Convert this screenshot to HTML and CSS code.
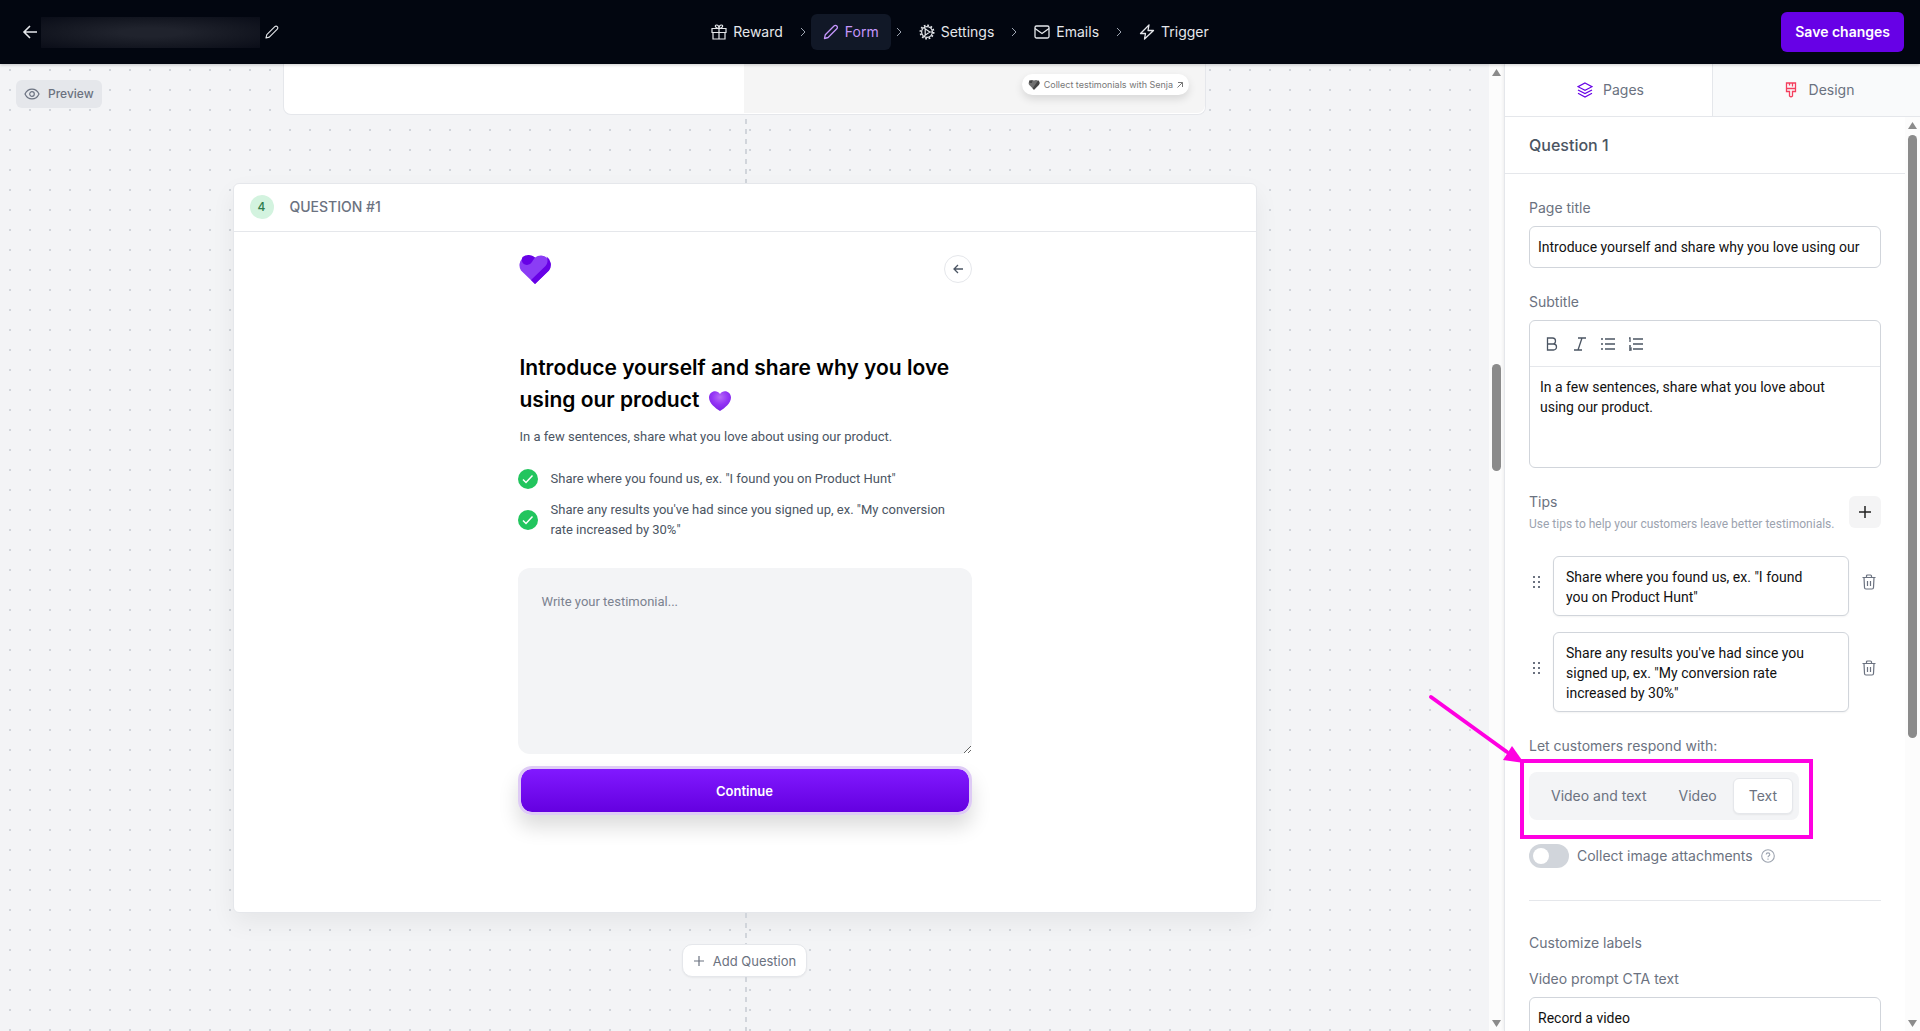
FILE: index.html
```html
<!DOCTYPE html>
<html lang="en">
<head>
    <meta charset="UTF-8">
    <meta name="viewport" content="width=device-width, initial-scale=1.0">
    <title>Form editor</title>
    <link rel="stylesheet" href="styles.css">
</head>
<body>

    <header class="topbar">
        <div class="topbar-left">
            <a href="#" class="icon-link" aria-label="Back">
                <svg width="16" height="16" viewBox="0 0 16 16" fill="none" stroke="currentColor" stroke-width="1.6"><path d="M15 8H2M8 2L2 8l6 6"/></svg>
            </a>
            <span class="form-name"></span>
            <button class="icon-link edit-name" aria-label="Rename">
                <svg width="14" height="14" viewBox="0 0 14 14" fill="none" stroke="currentColor" stroke-width="1.1" stroke-linejoin="round"><path d="M1 13l.8-3.4 8-8a1.7 1.7 0 0 1 2.5 2.5l-8 8z"/></svg>
            </button>
        </div>

        <nav class="steps">
            <a href="#" class="step">
                <svg width="16" height="16" viewBox="0 0 16 16" fill="none" stroke="currentColor" stroke-width="1.2"><path d="M1 4.5h14v4H1zM2 8.5h12V15H2zM8 4.5V15M8 4.5C4 4.500 3.500 1 5.500 1S8 3 8 4.500C8 3 8.500 1 10.500 1S12 4.500 8 4.500"/></svg>
                Reward
            </a>
            <svg class="chevron" width="16" height="16" viewBox="0 0 16 16"><path d="M6 4l4 4-4 4"/></svg>
            <a href="#" class="step active">
                <svg width="16" height="16" viewBox="0 0 16 16" fill="none" stroke="currentColor" stroke-width="1.3" stroke-linejoin="round"><path d="M1.500 14.500l.8-3.800 8.700-8.700a1.900 1.900 0 0 1 2.800 2.800l-8.700 8.700z"/></svg>
                Form
            </a>
            <svg class="chevron" width="16" height="16" viewBox="0 0 16 16"><path d="M6 4l4 4-4 4"/></svg>
            <a href="#" class="step">
                <svg width="16" height="16" viewBox="0 0 16 16" fill="none" stroke="currentColor" stroke-width="1.200"><circle cx="8" cy="8" r="5.400"/><circle cx="8" cy="8" r="6.600" stroke-width="1.800" stroke-dasharray="1.730 1.730"/><path d="M6.200 4.800v6.400L10.800 8zM10 8h3.500M6.200 4.800L5 3.200M6.200 11.200L5 12.800"/></svg>
                Settings
            </a>
            <svg class="chevron" width="16" height="16" viewBox="0 0 16 16"><path d="M6 4l4 4-4 4"/></svg>
            <a href="#" class="step">
                <svg width="16" height="16" viewBox="0 0 16 16" fill="none" stroke="currentColor" stroke-width="1.300"><rect x="1" y="2" width="14" height="12" rx="1.500"/><path d="M1 4.500l7 5 7-5"/></svg>
                Emails
            </a>
            <svg class="chevron" width="16" height="16" viewBox="0 0 16 16"><path d="M6 4l4 4-4 4"/></svg>
            <a href="#" class="step">
                <svg width="16" height="16" viewBox="0 0 16 16" fill="none" stroke="currentColor" stroke-width="1.300" stroke-linejoin="round"><path d="M10 1L1.500 9.500h5L5.500 15l9-8.500H9z"/></svg>
                Trigger
            </a>
        </nav>

        <div class="topbar-right">
            <button class="save-button">Save changes</button>
        </div>
    </header>

    <div class="workspace">
        <main class="canvas">
            <button class="preview-button">
                <svg width="16" height="16" viewBox="0 0 16 16" fill="none" stroke="currentColor" stroke-width="1.200"><path d="M1 8c3-6.500 11-6.500 14 0-3 6.500-11 6.500-14 0z"/><circle cx="8" cy="8" r="2.300"/></svg>
                Preview
            </button>

            <section class="previous-card">
                <div class="half"></div>
                <div class="half shaded">
                    <a href="#" class="senja-badge">
                        <svg width="12" height="11" viewBox="0 0 34 30"><path fill="#707070" d="M17 30L3 16A9.500 9.500 0 0 1 17 4a9.500 9.500 0 0 1 14 12z"/><path fill="#444" d="M17 30l-4-4L29 3a10 10 0 0 1 2 13zM3 4h10l-2 7H4z"/></svg>
                        <span>Collect testimonials with Senja</span>
                        <svg width="6" height="6" viewBox="0 0 6 6" fill="none" stroke="currentColor"><path d="M.5 5.500l5-5M1 .5h4.500V5"/></svg>
                    </a>
                </div>
            </section>
            <div class="connector connector-top"></div>

            <section class="question-card">
                <header class="card-header">
                    <span class="number">4</span>
                    <span>QUESTION #1</span>
                </header>
                <div class="form-preview">
                    <div class="logo-row">
                        <svg class="logo" width="34" height="30" viewBox="0 0 34 30">
                            <path fill="#8b3df5" d="M17 30L3 16.500A9.700 9.700 0 0 1 17 3.500a9.700 9.700 0 0 1 14 13z"/>
                            <path fill="#6701e6" d="M17 30l-4-3.900L27.500 12c2.500-3 2.500-6.500 1-9.400A9.700 9.700 0 0 1 31 16.500z"/>
                            <path fill="#6701e6" d="M4.500 3A9.500 9.500 0 0 1 17 3.500c-2 2-3 7-8 7.500-4 0-6.500-4-4.500-8z"/>
                        </svg>
                        <button class="back-button" aria-label="Previous page">
                            <svg width="12" height="12" viewBox="0 0 12 12" fill="none" stroke="currentColor" stroke-width="1.300"><path d="M11 6H2M6 2L2 6l4 4"/></svg>
                        </button>
                    </div>
                    <h1>Introduce yourself and share why you love using our product
                        <svg width="22" height="20" viewBox="0 0 22 20">
                            <defs><radialGradient id="heart-fill" cx="50%" cy="30%" r="75%"><stop offset="0" stop-color="#b66bf7"/><stop offset=".5" stop-color="#9333f5"/><stop offset="1" stop-color="#7420df"/></radialGradient></defs>
                            <path fill="url(#heart-fill)" d="M11 20C6 17 0 12 0 6.500 0 0 8-2 11 3c3-5 11-3 11 3.500C22 12 16 17 11 20z"/>
                        </svg>
                    </h1>
                    <p class="subtitle">In a few sentences, share what you love about using our product.</p>
                    <ul class="checklist">
                        <li>
                            <svg width="20" height="20" viewBox="0 0 20 20"><circle cx="10" cy="10" r="10" fill="#22c55e"/><path d="M5 10.500l3 3 6.500-7" fill="none" stroke="#fff" stroke-width="1.500"/></svg>
                            <span>Share where you found us, ex. "I found you on Product Hunt"</span>
                        </li>
                        <li>
                            <svg width="20" height="20" viewBox="0 0 20 20"><circle cx="10" cy="10" r="10" fill="#22c55e"/><path d="M5 10.500l3 3 6.500-7" fill="none" stroke="#fff" stroke-width="1.500"/></svg>
                            <span>Share any results you've had since you signed up, ex. "My conversion rate increased by 30%"</span>
                        </li>
                    </ul>
                    <textarea class="testimonial" placeholder="Write your testimonial..." aria-label="Testimonial"></textarea>
                    <button class="continue-button">Continue</button>
                </div>
            </section>

            <div class="connector connector-middle"></div>
            <button class="add-question">
                <svg width="12" height="12" viewBox="0 0 12 12" fill="none" stroke="currentColor" stroke-width="1.200"><path d="M6 1v10M1 6h10"/></svg>
                Add Question
            </button>
            <div class="connector connector-bottom"></div>
        </main>

        <div class="scrollbar canvas-scrollbar">
            <svg width="9" height="7" viewBox="0 0 9 7"><path d="M4.500 0L9 7H0z"/></svg>
            <div class="track"><div class="thumb"></div></div>
            <svg width="9" height="7" viewBox="0 0 9 7"><path d="M0 0h9L4.500 7z"/></svg>
        </div>

        <aside class="sidebar">
            <div class="tabs">
                <button class="tab selected">
                    <svg width="16" height="16" viewBox="0 0 16 16" fill="none" stroke="#6701e6" stroke-width="1.200"><path d="M8 1l7 3.700-7 3.600-7-3.600zM1 8l7 3.600L15 8M1 11.300L8 15l7-3.700"/></svg>
                    Pages
                </button>
                <button class="tab">
                    <svg width="16" height="16" viewBox="0 0 16 16" fill="none" stroke="#f43f5e" stroke-width="1.300"><path d="M3.500 1h9v8.500H9.500V14q-1.500 1.500-3 0V9.500h-3zM3.500 6.500h9M6.500 1v2.500M9.500 1v3.500"/></svg>
                    Design
                </button>
            </div>

            <div class="sidebar-body">
                <div class="settings">
                    <h2>Question 1</h2>
                    <div class="settings-form">
                        <div class="field">
                            <label for="pageTitle">Page title</label>
                            <input type="text" id="pageTitle" value="Introduce yourself and share why you love using our product 💜">
                        </div>

                        <div class="field">
                            <label for="subtitle">Subtitle</label>
                            <div class="editor">
                                <div class="toolbar">
                                    <button aria-label="Bold"><svg width="16" height="16" viewBox="0 0 16 16"><path d="M3.500 2h5a3 3 0 0 1 0 6h-5zM3.500 8h6a3 3 0 0 1 0 6h-6z"/></svg></button>
                                    <button aria-label="Italic"><svg width="16" height="16" viewBox="0 0 16 16"><path d="M6 2h8M2 14h8M10 2L6 14"/></svg></button>
                                    <button aria-label="Bullet list"><svg width="16" height="16" viewBox="0 0 16 16"><path d="M5 3h10M5 8h10M5 13h10M1 3h2M1 8h2M1 13h2"/></svg></button>
                                    <button aria-label="Numbered list"><svg width="16" height="16" viewBox="0 0 16 16"><path d="M5 3h10M5 8h10M5 13h10M1 2h1v4M1 10h2M1 12h2v2H1"/></svg></button>
                                </div>
                                <textarea id="subtitle">In a few sentences, share what you love about using our product.</textarea>
                            </div>
                        </div>

                        <div class="tips-heading">
                            <div>
                                <h3>Tips</h3>
                                <p>Use tips to help your customers leave better testimonials.</p>
                            </div>
                            <button class="add-tip" aria-label="Add tip">
                                <svg width="12" height="12" viewBox="0 0 12 12" fill="none" stroke="currentColor" stroke-width="1.500"><path d="M6 0v12M0 6h12"/></svg>
                            </button>
                        </div>

                        <div class="tips">
                            <div class="tip">
                                <svg class="handle" width="8" height="12" viewBox="0 0 8 12"><path d="M0 0h2v2H0zM5 0h2v2H5zM0 5h2v2H0zM5 5h2v2H5zM0 10h2v2H0zM5 10h2v2H5z"/></svg>
                                <textarea rows="2" aria-label="Tip 1">Share where you found us, ex. "I found you on Product Hunt"</textarea>
                                <button class="delete" aria-label="Delete tip 1"><svg width="14" height="16" viewBox="0 0 14 16"><path d="M.5 3.500h13M2 3.500l.5 10q0 1.500 1.500 1.500h6q1.500 0 1.500-1.500l.5-10M4.500 3.500V2q0-1 1-1h3q1 0 1 1v1.500M5.500 7v5M8.500 7v5"/></svg></button>
                            </div>
                            <div class="tip">
                                <svg class="handle" width="8" height="12" viewBox="0 0 8 12"><path d="M0 0h2v2H0zM5 0h2v2H5zM0 5h2v2H0zM5 5h2v2H5zM0 10h2v2H0zM5 10h2v2H5z"/></svg>
                                <textarea rows="3" aria-label="Tip 2">Share any results you've had since you signed up, ex. "My conversion rate increased by 30%"</textarea>
                                <button class="delete" aria-label="Delete tip 2"><svg width="14" height="16" viewBox="0 0 14 16"><path d="M.5 3.500h13M2 3.500l.5 10q0 1.500 1.500 1.500h6q1.500 0 1.500-1.500l.5-10M4.500 3.500V2q0-1 1-1h3q1 0 1 1v1.500M5.500 7v5M8.500 7v5"/></svg></button>
                            </div>
                        </div>

                        <h3 id="respondLabel">Let customers respond with:</h3>
                        <div class="segmented" role="radiogroup" aria-labelledby="respondLabel">
                            <input type="radio" name="respond" id="respondBoth">
                            <label for="respondBoth">Video and text</label>
                            <input type="radio" name="respond" id="respondVideo">
                            <label for="respondVideo">Video</label>
                            <input type="radio" name="respond" id="respondText" checked>
                            <label for="respondText">Text</label>
                            <div class="highlight"></div>
                            <svg class="arrow" width="96" height="72" viewBox="0 0 96 72"><path d="M3 4l76 55" fill="none" stroke="#ff00e1" stroke-width="4" stroke-linecap="round"/><path d="M84 53l12 17-21-3z" fill="#ff00e1"/></svg>
                        </div>

                        <div class="toggle-row">
                            <input type="checkbox" class="toggle" id="collectImages">
                            <label for="collectImages">Collect image attachments</label>
                            <svg width="14" height="14" viewBox="0 0 14 14" fill="none" stroke="#9ca3af" stroke-width="1.100"><circle cx="7" cy="7" r="6.300"/><path d="M5.200 5.500c0-2.200 3.600-2.200 3.600 0C8.800 6.800 7 6.800 7 8.300M7 9.500v1.200"/></svg>
                        </div>

                        <hr>

                        <h3>Customize labels</h3>
                        <div class="field cta-field">
                            <label for="videoCta">Video prompt CTA text</label>
                            <input type="text" id="videoCta" value="Record a video">
                        </div>
                    </div>
                </div>
                <div class="scrollbar sidebar-scrollbar">
                    <svg width="9" height="7" viewBox="0 0 9 7"><path d="M4.500 0L9 7H0z"/></svg>
                    <div class="track"><div class="thumb"></div></div>
                    <svg width="9" height="7" viewBox="0 0 9 7"><path d="M0 0h9L4.500 7z"/></svg>
                </div>
            </div>
        </aside>
    </div>

</body>
</html>
```
FILE: styles.css
```css
* {
    box-sizing: border-box;
}
body {
    margin: 0;
    height: 100vh;
    overflow: hidden;
    display: flex;
    flex-direction: column;
    font-family: Inter, "Liberation Sans", sans-serif;
    font-size: 14px;
    line-height: 20px;
    color: #6b7280;
}
button, input, textarea {
    font: inherit;
    color: inherit;
    margin: 0;
}
button {
    padding: 0;
    border: none;
    background: none;
    cursor: pointer;
}
a {
    color: inherit;
    text-decoration: none;
}
h1, h2, h3, p, ul {
    margin: 0;
    padding: 0;
    font-weight: 400;
}
h3 {
    font-size: 14px;
}
svg {
    display: block;
    flex-shrink: 0;
}

/* Top bar */
.topbar {
    display: grid;
    grid-template-columns: 1fr auto 1fr;
    align-items: center;
    height: 64px;
    flex-shrink: 0;
    padding: 0 16px;
    background-color: #020610;
    color: #e5e7eb;
    box-shadow: 0 1px 3px rgba(0, 0, 0, 0.2);
    z-index: 3;
}
.topbar-left {
    display: flex;
    align-items: center;
    padding-left: 6px;
}
.form-name {
    width: 219px;
    height: 31px;
    margin: 0 5px 0 3px;
    background: radial-gradient(ellipse at center, #20232d 20%, #151822 60%, #0a0d18 100%);
}
.steps {
    display: flex;
    align-items: center;
}
.step {
    display: flex;
    align-items: center;
    gap: 6px;
    height: 36px;
    padding: 0 12px;
    border-radius: 6px;
}
.step.active {
    background-color: #111827;
    color: #c596fc;
}
.chevron {
    fill: none;
    stroke: #9ca3af;
}
.topbar-right {
    display: flex;
    justify-content: flex-end;
}
.save-button {
    height: 40px;
    padding: 0 14px;
    border-radius: 6px;
    background-color: #6701e6;
    color: white;
    font-weight: 600;
}

/* Canvas */
.workspace {
    display: flex;
    flex: 1;
    min-height: 0;
}
.canvas {
    position: relative;
    flex: 1;
    display: flex;
    flex-direction: column;
    align-items: center;
    overflow: hidden;
    background-color: #f3f4f6;
    background-image: conic-gradient(from 270deg at 2px 2px, #d1d5db 90deg, transparent 0);
    background-size: 20px 20px;
    background-position: 9px 5px;
}
.preview-button {
    position: absolute;
    top: 16px;
    left: 16px;
    display: flex;
    align-items: center;
    gap: 8px;
    height: 28px;
    padding: 0 8px;
    border-radius: 6px;
    background-color: #e5e7eb;
    font-size: 12px;
    font-weight: 500;
}
.previous-card {
    display: flex;
    flex-shrink: 0;
    width: 62%;
    height: 51px;
    border: 1px solid #e5e7eb;
    border-top: none;
    border-radius: 0 0 8px 8px;
    background-color: white;
}
.half {
    width: 50%;
}
.shaded {
    display: flex;
    justify-content: flex-end;
    align-items: flex-start;
    margin-bottom: 1px;
    padding: 10px 16px;
    border-radius: 0 0 8px 0;
    background-color: #f5f5f5;
}
.senja-badge {
    display: flex;
    align-items: center;
    gap: 4px;
    height: 21px;
    padding: 0 6px;
    border-radius: 11px;
    background-color: white;
    box-shadow: 0 4px 8px rgba(0, 0, 0, 0.12);
    font-size: 9px;
    color: #777;
}
.connector {
    width: 2px;
    flex-shrink: 0;
    margin-left: 2px;
    background: repeating-linear-gradient(#d1d5db 0 5px, transparent 5px 10px);
}
.connector-top {
    height: 64px;
    margin-top: 4px;
}
.connector-middle {
    height: 31px;
}
.connector-bottom {
    flex: 1;
}
.question-card {
    flex-shrink: 0;
    width: 1024px;
    max-width: 90%;
    padding-bottom: 97px;
    border: 1px solid #e5e7eb;
    border-radius: 6px;
    background-color: white;
    box-shadow: 0 10px 24px rgba(0, 0, 0, 0.06);
}
.card-header {
    display: flex;
    align-items: center;
    gap: 16px;
    height: 48px;
    padding: 0 16px 2px;
    border-bottom: 1px solid #e5e7eb;
    font-weight: 500;
}
.number {
    width: 24px;
    height: 24px;
    border-radius: 50%;
    background-color: #d3f3df;
    color: #2f7d4d;
    font-size: 12px;
    line-height: 24px;
    text-align: center;
}
.form-preview {
    width: 454px;
    margin: 0 auto;
    padding-top: 23px;
    font-family: Roboto, "Liberation Sans", sans-serif;
    font-size: 13px;
    color: #4b5563;
}
.logo-row {
    display: flex;
    justify-content: space-between;
    align-items: center;
    height: 28px;
}
.back-button {
    display: flex;
    align-items: center;
    justify-content: center;
    width: 28px;
    height: 28px;
    border: 1px solid #e5e7eb;
    border-radius: 50%;
}
.form-preview h1 {
    margin-top: 69px;
    padding-left: 2px;
    font-family: Inter, "Liberation Sans", sans-serif;
    font-size: 21px;
    font-weight: 600;
    line-height: 32px;
    color: black;
}
.form-preview h1 svg {
    display: inline-block;
    vertical-align: middle;
    margin-left: 4px;
}
.subtitle {
    margin-top: 11px;
    padding-left: 2px;
}
.checklist {
    display: flex;
    flex-direction: column;
    gap: 11px;
    margin-top: 22px;
    padding-right: 12px;
    list-style: none;
}
.checklist li {
    display: flex;
    align-items: center;
    gap: 13px;
}
.testimonial {
    display: block;
    width: 100%;
    height: 186px;
    margin-top: 28px;
    padding: 24px;
    border: none;
    border-radius: 12px;
    background-color: #f3f4f6;
    resize: vertical;
}
.testimonial::placeholder {
    color: #7b8290;
}
.continue-button {
    width: 100%;
    height: 49px;
    margin-top: 12px;
    border: 3px solid #decbf5;
    border-radius: 14px;
    background: linear-gradient(#8119ff, #6400e0) padding-box;
    box-shadow: 0 12px 20px rgba(0, 0, 0, 0.14);
    font-family: Inter, "Liberation Sans", sans-serif;
    color: white;
    font-weight: 600;
}
.add-question {
    display: flex;
    align-items: center;
    gap: 8px;
    flex-shrink: 0;
    height: 33px;
    padding: 0 10px;
    border: 1px solid #e5e7eb;
    border-radius: 10px;
    background-color: white;
    box-shadow: 0 1px 2px rgba(0, 0, 0, 0.05);
    font-size: 13px;
}

/* Scrollbars */
.scrollbar {
    display: flex;
    flex-direction: column;
    align-items: center;
    gap: 6px;
    flex-shrink: 0;
    width: 15px;
    padding: 5px 0 4px;
    background-color: #fcfcfc;
    fill: #8b8b8b;
}
.track {
    flex: 1;
    display: flex;
    flex-direction: column;
    width: 9px;
}
.track::before, .track::after {
    content: "";
}
.thumb {
    border-radius: 5px;
    background-color: #8b8b8b;
}
.canvas-scrollbar .track::before {
    flex: 282;
}
.canvas-scrollbar .thumb {
    flex: 107;
}
.canvas-scrollbar .track::after {
    flex: 544;
}
.sidebar-scrollbar .thumb {
    flex: 24;
}
.sidebar-scrollbar .track::after {
    flex: 11;
}

/* Sidebar */
.sidebar {
    display: flex;
    flex-direction: column;
    width: 416px;
    flex-shrink: 0;
    border-left: 1px solid #e5e7eb;
    background-color: white;
    box-shadow: -1px 0 3px rgba(0, 0, 0, 0.06);
    z-index: 2;
}
.tabs {
    display: flex;
    flex-shrink: 0;
    height: 53px;
    border-bottom: 1px solid #e5e7eb;
}
.tab {
    flex: 1;
    display: flex;
    align-items: center;
    justify-content: center;
    gap: 10px;
    padding-left: 4px;
    background-color: #f9fafb;
}
.tab.selected {
    border-right: 1px solid #e5e7eb;
    background-color: white;
}
.sidebar-body {
    display: flex;
    flex: 1;
    min-height: 0;
    overflow-x: visible;
    overflow-y: clip;
}
.settings {
    flex: 1;
    min-width: 0;
}
.settings h2 {
    height: 57px;
    padding: 0 24px;
    border-bottom: 1px solid #e5e7eb;
    font-size: 16px;
    font-weight: 500;
    line-height: 56px;
    color: #4b5563;
}
.settings-form {
    padding: 24px;
}
.field {
    margin-bottom: 24px;
}
.field > label {
    display: block;
    margin-bottom: 8px;
}
input[type="text"], .editor textarea, .tip textarea {
    font-family: Roboto, "Liberation Sans", sans-serif;
    color: #111;
}
input[type="text"] {
    width: 100%;
    height: 42px;
    padding: 0 20px 0 8px;
    border: 1px solid #d1d5db;
    border-radius: 6px;
}
.editor {
    border: 1px solid #d1d5db;
    border-radius: 6px;
}
.toolbar {
    display: flex;
    align-items: center;
    gap: 12px;
    height: 46px;
    padding: 0 14px;
    border-bottom: 1px solid #e5e7eb;
}
.toolbar svg {
    fill: none;
    stroke: #4b5563;
    stroke-width: 1.3;
}
.editor textarea {
    display: block;
    width: 100%;
    height: 100px;
    padding: 10px 36px 10px 10px;
    border: none;
    border-radius: 6px;
    background: none;
    resize: none;
}
.tips-heading {
    display: flex;
    align-items: center;
    justify-content: space-between;
    height: 40px;
    margin-bottom: 24px;
}
.tips-heading > div {
    width: 320px;
}
.tips-heading p {
    margin-top: 4px;
    font-family: Roboto, "Liberation Sans", sans-serif;
    font-size: 12px;
    line-height: 16px;
    white-space: nowrap;
    color: #9ca3af;
}
.add-tip {
    display: flex;
    align-items: center;
    justify-content: center;
    width: 32px;
    height: 32px;
    border-radius: 6px;
    background-color: #f4f4f5;
    color: #222;
}
.tips {
    display: flex;
    flex-direction: column;
    gap: 16px;
    margin-bottom: 24px;
}
.tip {
    display: flex;
    align-items: center;
    padding: 0 5px 0 4px;
}
.handle {
    margin-bottom: 8px;
    fill: #6b7280;
}
.tip textarea {
    display: block;
    flex: 1;
    min-width: 0;
    margin: 0 13px 0 12px;
    padding: 10px 32px 8px 12px;
    border: 1px solid #d1d5db;
    border-radius: 6px;
    box-shadow: 0 1px 2px rgba(0, 0, 0, 0.05);
    resize: none;
    overflow: hidden;
}
.delete {
    margin-bottom: 8px;
}
.delete svg {
    fill: none;
    stroke: #6b7280;
    stroke-width: 1.2;
}
.segmented {
    position: relative;
    display: flex;
    width: fit-content;
    height: 48px;
    margin: 16px 0 24px;
    padding: 6px;
    border-radius: 8px;
    background-color: #f3f4f6;
}
.segmented input {
    appearance: none;
    position: absolute;
}
.segmented label {
    padding: 7px 15px;
    border: 1px solid transparent;
    border-radius: 6px;
    white-space: nowrap;
}
.segmented input:checked + label {
    border-color: #e5e7eb;
    background-color: white;
    box-shadow: 0 1px 2px rgba(0, 0, 0, 0.06);
}
.highlight {
    position: absolute;
    top: -13px;
    right: -14px;
    bottom: -19px;
    left: -9px;
    border: 4px solid #ff00e1;
    pointer-events: none;
}
.arrow {
    position: absolute;
    top: -79px;
    left: -101px;
    pointer-events: none;
}
.toggle-row {
    display: flex;
    align-items: center;
    gap: 8px;
    height: 24px;
}
.toggle {
    appearance: none;
    width: 40px;
    height: 24px;
    padding: 4px;
    border-radius: 12px;
    background-color: #d1d5db;
}
.toggle::before {
    content: "";
    display: block;
    width: 16px;
    height: 16px;
    border-radius: 50%;
    background-color: white;
}
.toggle:checked {
    background-color: #6701e6;
}
hr {
    height: 1px;
    margin: 32px 0;
    border: none;
    background-color: #e5e7eb;
}
.cta-field {
    margin-top: 16px;
}
```
